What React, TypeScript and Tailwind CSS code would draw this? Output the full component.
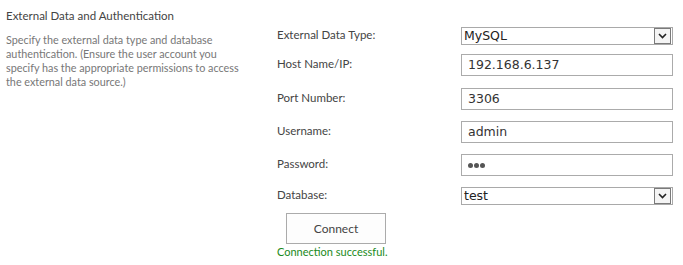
import React from "react";

const ui = { fontFamily: 'Lato, "Open Sans", sans-serif' };
const field = { fontFamily: '"DejaVu Sans", Verdana, sans-serif' };

function Chevron() {
  return (
    <div className="w-[17px] h-[16px] border border-[#7a7a7a] bg-[#f4f4f4] flex items-center justify-center mr-[1px]">
      <svg width="9" height="6" viewBox="0 0 9 6">
        <path d="M1 1 L4.5 4.5 L8 1" fill="none" stroke="#222" strokeWidth="1.6" />
      </svg>
    </div>
  );
}

function Select({ value }: { value: string }) {
  return (
    <div
      className="w-[212px] h-[18px] border border-[#a9a9a9] flex items-center justify-between pl-[2px] text-[12.5px] text-[#222]"
      style={field}
    >
      <span className="leading-none">{value}</span>
      <Chevron />
    </div>
  );
}

function Input({ value, dots }: { value: string; dots?: boolean }) {
  return (
    <div
      className="w-[212px] h-[22px] border border-[#ababab] flex items-center pl-[6px] text-[12.5px] text-[#333]"
      style={field}
    >
      {dots ? (
        <span className="flex gap-[1px]">
          <span className="w-[5px] h-[5px] rounded-full bg-[#555]" />
          <span className="w-[5px] h-[5px] rounded-full bg-[#555]" />
          <span className="w-[5px] h-[5px] rounded-full bg-[#555]" />
        </span>
      ) : (
        <span className="leading-none">{value}</span>
      )}
    </div>
  );
}

function Row({
  label,
  children,
  mt,
}: {
  label: string;
  children: React.ReactNode;
  mt: string;
}) {
  return (
    <div className={`flex items-center ${mt}`}>
      <div className="w-[184px] text-[11.5px] text-[#444] -mt-[2px]">{label}</div>
      {children}
    </div>
  );
}

export default function App() {
  return (
    <div className="w-[683px] h-[265px] bg-white flex overflow-hidden" style={ui}>
      <div className="w-[277px] pl-[6px] pt-[8px]">
        <div className="text-[11.5px] text-[#444] leading-[16px]">
          External Data and Authentication
        </div>
        <div className="mt-[9px] w-[236px] text-[10.8px] leading-[14px] text-[#777]">
          Specify the external data type and database authentication. (Ensure
          the user account you specify has the appropriate permissions to access
          the external data source.)
        </div>
      </div>
      <div className="flex flex-col pt-[27px]">
        <Row label="External Data Type:" mt="mt-0">
          <Select value="MySQL" />
        </Row>
        <Row label="Host Name/IP:" mt="mt-[9px]">
          <Input value="192.168.6.137" />
        </Row>
        <Row label="Port Number:" mt="mt-[12px]">
          <Input value="3306" />
        </Row>
        <Row label="Username:" mt="mt-[11px]">
          <Input value="admin" />
        </Row>
        <Row label="Password:" mt="mt-[11px]">
          <Input value="" dots />
        </Row>
        <Row label="Database:" mt="mt-[11px]">
          <Select value="test" />
        </Row>
        <div className="mt-[8px] ml-[9px] w-[100px] h-[31px] border border-[#ababab] bg-[#fdfdfd] flex items-center justify-center text-[12px] text-[#444]">
          Connect
        </div>
        <div className="mt-[1px] text-[11px] leading-[14px] text-[#1a8a1a]">
          Connection successful.
        </div>
      </div>
    </div>
  );
}
